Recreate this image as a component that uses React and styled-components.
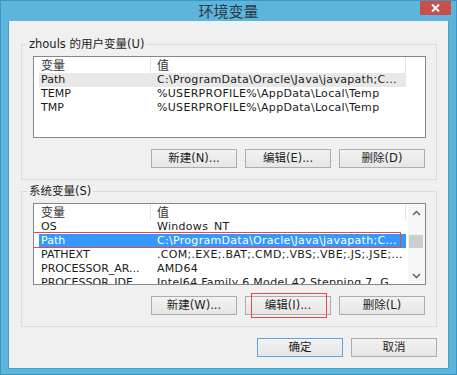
import React from "react";
import styled, { createGlobalStyle, css } from "styled-components";

const GlobalStyle = createGlobalStyle`
  html, body {
    margin: 0;
    padding: 0;
    background: #5cb4da;
  }
`;

const Window = styled.div`
  width: 457px;
  height: 375px;
  box-sizing: border-box;
  background: #5db5db;
  border: 1px solid #3b97c2;
  display: flex;
  flex-direction: column;
  font-family: "DejaVu Sans", "Noto Sans CJK SC", sans-serif;
  font-size: 11px;
  color: #1a1a1a;
  overflow: hidden;
`;

const TitleBar = styled.div`
  height: 20px;
  display: grid;
  grid-template-columns: 1fr auto 1fr;
  align-items: start;
`;

const Title = styled.div`
  grid-column: 2;
  font-family: "Noto Sans CJK SC", sans-serif;
  font-size: 15px;
  line-height: 20px;
  color: #2b3a44;
`;

const CloseButton = styled.div`
  grid-column: 3;
  justify-self: end;
  margin-right: 5px;
  margin-top: -1px;
  width: 31px;
  height: 15px;
  background: #c7504b;
  display: flex;
  align-items: center;
  justify-content: center;
`;

const Body = styled.div`
  flex: 1;
  margin: 0 7px 5px;
  background: #f0f0f0;
  border: 1px solid #4a9fc8;
  border-top: none;
  padding: 0 11px 10px 12px;
  display: flex;
  flex-direction: column;
`;

const Group = styled.fieldset`
  margin: ${(p) => (p.$first ? "15px" : "3px")} 0 0;
  padding: 4px 10px 11px 11px;
  border: 1px solid #d9dde0;
  min-width: 0;
`;

const Legend = styled.legend`
  font-size: 11.5px;
  line-height: 16px;
  padding: 0 2px;
  margin-left: -6px;
  color: #1e1e1e;
`;

const List = styled.div`
  position: relative;
  height: 82px;
  box-sizing: border-box;
  border: 1px solid #828790;
  background: #fff;
  display: flex;
  overflow: hidden;
`;

const ListBody = styled.div`
  flex: 1;
  min-width: 0;
  overflow: hidden;
`;

const Header = styled.div`
  height: 16px;
  display: flex;
`;

const HeaderCell = styled.div`
  width: ${(p) => p.$width}px;
  padding-left: ${(p) => p.$pad}px;
  box-sizing: border-box;
  border-right: 1px solid #e5e5e5;
  font-family: "Noto Sans CJK SC", sans-serif;
  font-size: 12px;
  line-height: 16px;
  color: #333;
`;

const Row = styled.div`
  height: 14px;
  width: 367px;
  margin-left: 5px;
  display: grid;
  grid-template-columns: 118px 1fr;
  line-height: 14px;
  white-space: nowrap;
  ${(p) =>
    p.$selected &&
    css`
      background: #3399ff;
      color: #fff;
    `}
  ${(p) =>
    p.$muted &&
    css`
      background: #e8e8e8;
    `}
`;

const Cell = styled.div`
  padding-left: ${(p) => p.$pad || 0}px;
  letter-spacing: ${(p) => p.$spacing || 0}px;
  overflow: hidden;
`;

const Scrollbar = styled.div`
  width: 17px;
  background: #f7f7f7;
  display: flex;
  flex-direction: column;
`;

const Arrow = styled.div`
  height: 17px;
  display: flex;
  align-items: center;
  justify-content: center;
`;

const Track = styled.div`
  flex: 1;
`;

const Thumb = styled.div`
  margin: 14px 2px 0 1px;
  height: 13px;
  background: #cdcdcd;
`;

const ButtonRow = styled.div`
  display: flex;
  justify-content: flex-end;
  gap: 8px;
  margin-top: 11px;
  padding-right: 1px;
`;

const Footer = styled.div`
  display: flex;
  justify-content: flex-end;
  gap: 8px;
  margin-top: 11px;
`;

const Button = styled.button`
  position: relative;
  width: 86px;
  height: 19px;
  box-sizing: border-box;
  padding: 0;
  border: 1px solid #adadad;
  background: linear-gradient(#f2f2f2, #e6e6e6);
  font-family: "DejaVu Sans", "Noto Sans CJK SC", sans-serif;
  font-size: 11.5px;
  line-height: 17px;
  color: #1e1e1e;
  ${(p) =>
    p.$default &&
    css`
      border-color: #5ba6ea;
    `}
`;

const Marker = styled.div`
  position: absolute;
  border: 1px solid #e8464a;
  pointer-events: none;
  left: ${(p) => p.$left}px;
  top: ${(p) => p.$top}px;
  width: ${(p) => p.$w}px;
  height: ${(p) => p.$h}px;
`;

const Chevron = ({ up }) => (
  <svg width="9" height="6" viewBox="0 0 9 6">
    <path
      d={up ? "M1 5 L4.5 1.5 L8 5" : "M1 1 L4.5 4.5 L8 1"}
      fill="none"
      stroke="#5a5a5a"
      strokeWidth="1.4"
    />
  </svg>
);

const userVars = [
  ["Path", "C:\\ProgramData\\Oracle\\Java\\javapath;C..."],
  ["TEMP", "%USERPROFILE%\\AppData\\Local\\Temp"],
  ["TMP", "%USERPROFILE%\\AppData\\Local\\Temp"],
];

const systemVars = [
  ["OS", "Windows_NT"],
  ["Path", "C:\\ProgramData\\Oracle\\Java\\javapath;C..."],
  ["PATHEXT", ".COM;.EXE;.BAT;.CMD;.VBS;.VBE;.JS;.JSE;..."],
  ["PROCESSOR_AR...", "AMD64"],
  ["PROCESSOR_IDE...", "Intel64 Family 6 Model 42 Stepping 7, G"],
];

const VarTable = ({ rows, selected, muted }) => (
  <ListBody>
    <Header>
      <HeaderCell $width={117} $pad={7}>
        变量
      </HeaderCell>
      <HeaderCell $width={255} $pad={6}>
        值
      </HeaderCell>
    </Header>
    {rows.map(([name, value], i) => (
      <Row key={name} $selected={i === selected} $muted={i === muted}>
        <Cell $pad={2}>{name}</Cell>
        <Cell $spacing={0.3}>{value}</Cell>
      </Row>
    ))}
  </ListBody>
);

export default function App() {
  return (
    <>
      <GlobalStyle />
      <Window>
        <TitleBar>
          <Title>环境变量</Title>
          <CloseButton>
            <svg width="9" height="8" viewBox="0 0 9 8">
              <path d="M1 0.5 L8 7.5 M8 0.5 L1 7.5" stroke="#fff" strokeWidth="2" />
            </svg>
          </CloseButton>
        </TitleBar>
        <Body>
          <Group $first>
            <Legend>zhouls 的用户变量(U)</Legend>
            <List>
              <VarTable rows={userVars} muted={0} />
            </List>
            <ButtonRow>
              <Button>新建(N)...</Button>
              <Button>编辑(E)...</Button>
              <Button>删除(D)</Button>
            </ButtonRow>
          </Group>
          <Group>
            <Legend>系统变量(S)</Legend>
            <List>
              <VarTable rows={systemVars} selected={1} />
              <Scrollbar>
                <Arrow>
                  <Chevron up />
                </Arrow>
                <Track>
                  <Thumb />
                </Track>
                <Arrow>
                  <Chevron />
                </Arrow>
              </Scrollbar>
              <Marker $left={-1} $top={28} $w={366} $h={14} />
            </List>
            <ButtonRow>
              <Button>新建(W)...</Button>
              <Button>
                编辑(I)...
                <Marker $left={5} $top={-4} $w={74} $h={23} />
              </Button>
              <Button>删除(L)</Button>
            </ButtonRow>
          </Group>
          <Footer>
            <Button $default>确定</Button>
            <Button>取消</Button>
          </Footer>
        </Body>
      </Window>
    </>
  );
}
